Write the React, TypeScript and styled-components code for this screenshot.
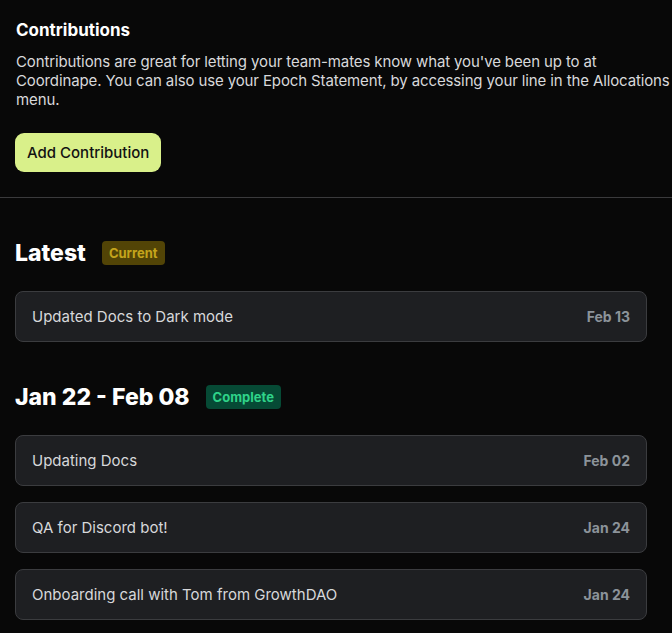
import React from "react";
import styled, { createGlobalStyle } from "styled-components";

const Global = createGlobalStyle`
  html, body { margin: 0; padding: 0; background: #080808; }
  body { font-family: Inter, "Noto Sans", sans-serif; color: #e4e4e6; }
  * { box-sizing: border-box; }
`;

const Page = styled.div`
  width: 672px;
  min-height: 633px;
  background: #080808;
  overflow: hidden;
`;

const Intro = styled.section`
  padding: 20px 0 25px 16px;
  display: flex;
  flex-direction: column;
  align-items: flex-start;
`;

const Title = styled.h2`
  margin: 0;
  font-size: 17px;
  font-weight: 700;
  line-height: 20px;
  color: #ffffff;
`;

const Description = styled.p`
  margin: 12px 0 0;
  font-size: 15px;
  line-height: 19px;
  color: #d8d9db;
  max-width: 656px;
  white-space: nowrap;
  letter-spacing: -0.12px;
`;

const Button = styled.button`
  margin-top: 24px;
  margin-left: -1px;
  height: 39px;
  padding: 0 12px;
  border: none;
  border-radius: 9px;
  background: #d9f08a;
  color: #121212;
  font-family: inherit;
  font-size: 15px;
  font-weight: 500;
`;

const Divider = styled.hr`
  margin: 0;
  border: none;
  border-top: 1px solid #3a3a3c;
`;

const Section = styled.section`
  padding: 0 25px 0 15px;
  display: flex;
  flex-direction: column;
`;

const SectionHeader = styled.div`
  display: flex;
  align-items: center;
  gap: 16px;
  height: 26px;
  margin-bottom: 25px;
`;

const Heading = styled.h3`
  margin: 0;
  font-size: 23px;
  font-weight: 800;
  color: #ffffff;
`;

const Badge = styled.span<{ $tone: "current" | "complete" }>`
  display: inline-flex;
  align-items: center;
  height: 24px;
  padding: 0 7px;
  border-radius: 4px;
  font-size: 13px;
  font-weight: 700;
  background: ${(p) => (p.$tone === "current" ? "#524406" : "#064a35")};
  color: ${(p) => (p.$tone === "current" ? "#c4a41c" : "#2fd389")};
`;

const List = styled.div`
  display: flex;
  flex-direction: column;
  gap: 16px;
`;

const Card = styled.div`
  display: flex;
  align-items: center;
  justify-content: space-between;
  height: 51px;
  padding: 0 16px;
  background: #1e1f22;
  border: 1px solid #3b3c3f;
  border-radius: 8px;
`;

const CardText = styled.span`
  font-size: 15px;
  color: #d7d8da;
`;

const CardDate = styled.span`
  font-size: 14px;
  font-weight: 700;
  color: #8c939a;
`;

const Group = styled.div<{ $top: number }>`
  margin-top: ${(p) => p.$top}px;
`;

type Item = { text: string; date: string };

const latest: Item[] = [{ text: "Updated Docs to Dark mode", date: "Feb 13" }];
const past: Item[] = [
  { text: "Updating Docs", date: "Feb 02" },
  { text: "QA for Discord bot!", date: "Jan 24" },
  { text: "Onboarding call with Tom from GrowthDAO", date: "Jan 24" },
];

const Items = ({ items }: { items: Item[] }) => (
  <List>
    {items.map((it, i) => (
      <Card key={i}>
        <CardText>{it.text}</CardText>
        <CardDate>{it.date}</CardDate>
      </Card>
    ))}
  </List>
);

export default function App() {
  return (
    <Page>
      <Global />
      <Intro>
        <Title>Contributions</Title>
        <Description>
          Contributions are great for letting your team-mates know what you've been up to at
          <br />
          Coordinape. You can also use your Epoch Statement, by accessing your line in the Allocations
          <br />
          menu.
        </Description>
        <Button>Add Contribution</Button>
      </Intro>
      <Divider />
      <Section>
        <Group $top={42}>
          <SectionHeader>
            <Heading>Latest</Heading>
            <Badge $tone="current">Current</Badge>
          </SectionHeader>
          <Items items={latest} />
        </Group>
        <Group $top={42}>
          <SectionHeader>
            <Heading>Jan 22 - Feb 08</Heading>
            <Badge $tone="complete">Complete</Badge>
          </SectionHeader>
          <Items items={past} />
        </Group>
      </Section>
    </Page>
  );
}
